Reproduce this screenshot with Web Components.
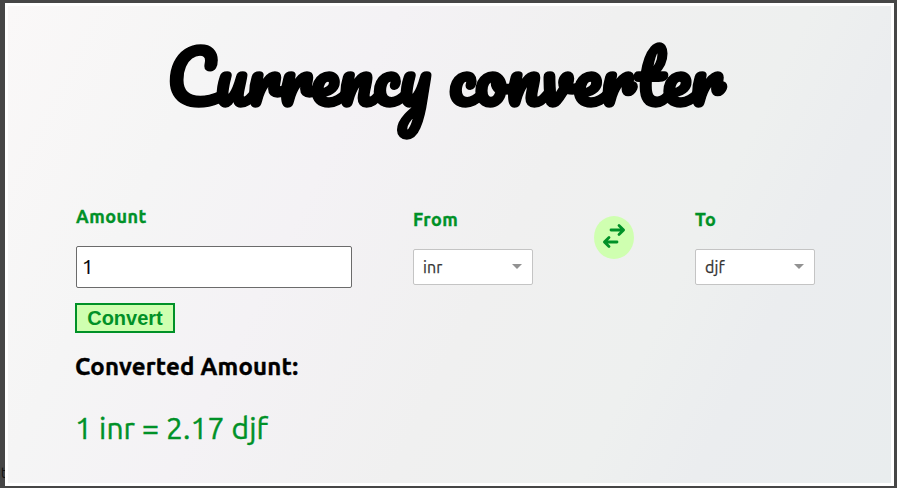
<!DOCTYPE html>
<html lang="en"><head><meta charset="utf-8"><title>Currency converter</title>
<style>
html,body{margin:0;height:100%;overflow:hidden}
body{background:#464646;font-family:Ubuntu,"Noto Sans",sans-serif;color:#000}
</style></head><body>
<converter-app></converter-app>
<script>
const define=(name,html)=>customElements.define(name,class extends HTMLElement{
  constructor(){
    super();
    const t=document.createElement('template');
    t.innerHTML=html;
    this.attachShadow({mode:'open'}).append(t.content.cloneNode(true));
  }
});

define('script-title',`<style>
:host{display:block;height:120px}
h1{margin:0;text-align:center;font:700 70px/120px Pacifico,"Lato",cursive;white-space:nowrap;-webkit-text-stroke:1.3px #000}
</style><h1><slot></slot></h1>`);

define('field-label',`<style>
:host{display:block;color:#009127;font-weight:700;font-size:18px;line-height:24px;white-space:nowrap;letter-spacing:.5px;-webkit-text-stroke:.35px #009127}
</style><slot></slot>`);

define('amount-input',`<style>
:host{display:block}
input{display:block;box-sizing:border-box;width:276px;height:42px;margin:0;padding:0 5px 1px;border:1px solid #6b6b6b;border-radius:2px;background:#fff;color:#000;font:20px Ubuntu,"Noto Sans",sans-serif;outline:0;-webkit-text-stroke:.2px #000}
</style><input type="text" value="1">`);

define('convert-button',`<style>
:host{display:block}
button{display:block;box-sizing:border-box;width:100px;height:30px;margin:0;padding:0;border:2px solid #009127;border-radius:0;background:#cfffb0;color:#009127;font:700 20px/26px "Liberation Sans",sans-serif}
</style><button><slot></slot></button>`);

define('currency-select',`<style>
:host{display:flex;box-sizing:border-box;width:120px;height:36px;padding:0 10px 0 9px;align-items:center;justify-content:space-between;border:1px solid #c4c4c4;border-radius:2px;background:#fff;color:#333;font-size:16px;line-height:34px;letter-spacing:.1px;-webkit-text-stroke:.25px #333}
svg{display:block;width:10px;height:5px;margin-top:-1px}
</style><span><slot></slot></span><svg viewBox="0 0 10 5"><path d="M0 0H10L5 5Z" fill="#929292"/></svg>`);

define('swap-button',`<style>
:host{display:block;width:40px;height:43px}
svg{display:block}
</style><svg width="40" height="43" viewBox="0 0 40 43"><ellipse cx="20" cy="21.5" rx="20" ry="21.5" fill="#cfffb0"/>
<g fill="none" stroke="#009127" stroke-width="2.8" stroke-linecap="round" stroke-linejoin="round"><path d="M17 14H29M25 9.4L29.6 14L25 18.6M23 26H11M15 21.4L10.4 26L15 30.6"/></g></svg>`);

define('converter-app',`<style>
:host{display:block;box-sizing:border-box;height:100vh;padding:3px 3px 2px 5px}
main{box-sizing:border-box;height:483px;border:3px solid #fff;background:linear-gradient(116deg,#faf8f8 0%,#f5f5f5 20%,#f4f2f5 35%,#f0f0f0 55%,#eef0ef 72%,#ebedef 82%,#e9edee 100%);padding:11px 0 0 67px}
script-title{width:600px;margin-left:71px}
.row{display:grid;grid-template-columns:337px 181px 101px 120px;height:130px;margin-top:66px;margin-left:1px}
field-label{padding-top:1px}
amount-input{margin-top:18px}
.side{padding-top:3px}
.side currency-select{margin-top:18px}
swap-button{margin-top:13px}
convert-button{margin-top:-30px}
h3{margin:18px 0 0;font-size:24px;line-height:32px;white-space:nowrap;letter-spacing:.2px;-webkit-text-stroke:.4px #000}
p{margin:24px 0 0;color:#009127;font-size:30px;line-height:42px;white-space:nowrap;letter-spacing:.1px;-webkit-text-stroke:.45px #009127}
.edge{position:absolute;left:-3px;top:465px;color:#111;font-size:15px;line-height:16px;width:8px;overflow:hidden}
</style><main>
<script-title>Currency converter</script-title>
<div class="row"><div><field-label>Amount</field-label><amount-input></amount-input></div>
<div class="side"><field-label>From</field-label><currency-select>inr</currency-select></div>
<swap-button></swap-button>
<div class="side"><field-label>To</field-label><currency-select>djf</currency-select></div></div>
<convert-button>Convert</convert-button>
<h3>Converted Amount:</h3><p>1 inr = 2.17 djf</p>
</main><span class="edge">it</span>`);
</script></body></html>
